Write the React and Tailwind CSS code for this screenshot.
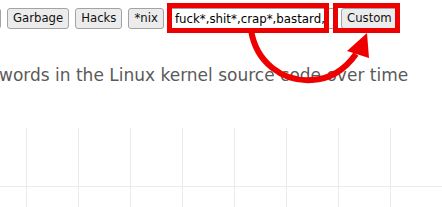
import React from 'react';

const FONT = { fontFamily: '"DejaVu Sans", Verdana, sans-serif' };

const btn =
  'h-[21px] shrink-0 rounded-[3px] border border-[#a3a3a3] bg-[#ececec] px-[5px] text-[11.7px] leading-none text-[#111]';

const GRID_COLS = [0, 1, 2, 3, 4, 5, 6, 7, 8];

const App = () => {
  return (
    <div className="relative h-[207px] w-[442px] overflow-hidden bg-white" style={FONT}>
      {/* filter buttons */}
      <div className="ml-[-49px] flex items-center gap-[6px] pt-[8px]">
        <button className={`${btn} w-[50px]`}></button>
        <button className={btn}>Garbage</button>
        <button className={btn}>Hacks</button>
        <button className={btn}>*nix</button>
        <input
          readOnly
          value="fuck*,shit*,crap*,bastard,"
          className="h-[21px] w-[165px] shrink-0 border border-[#a0a0a0] bg-white pl-[4px] pr-0 text-[11.8px] text-black outline-none"
        />
        <button className={`${btn} w-[57px]`}>Custom</button>
      </div>

      <p className="ml-[-1px] mt-[36px] whitespace-nowrap text-[17px] leading-[20px] text-[#5a5a5a]">
        words in the Linux kernel source code over time
      </p>

      {/* chart gridlines */}
      <div className="mt-[43px] h-[79px]">
        <div className="flex h-[59px] border-b border-[#ebebeb] pl-[26px]">
          {GRID_COLS.map((i) => (
            <div key={i} className="w-[52px] shrink-0 border-l border-[#ebebeb]"></div>
          ))}
        </div>
        <div className="flex h-[20px] pl-[26px]">
          {GRID_COLS.map((i) => (
            <div key={i} className="w-[52px] shrink-0 border-l border-[#ebebeb]"></div>
          ))}
        </div>
      </div>

      {/* red annotation */}
      <div className="absolute left-[167px] top-[3px] h-[30px] w-[162px] border-[5px] border-[#ee0000]"></div>
      <div className="absolute left-[333px] top-[3px] h-[30px] w-[67px] border-[5px] border-[#ee0000]"></div>
      <svg className="absolute left-0 top-0" width="442" height="207" viewBox="0 0 442 207">
        <path
          d="M251 30 C256 62, 282 82, 312 80 C333 79, 346 68, 356 54"
          fill="none"
          stroke="#ee0000"
          strokeWidth="6"
        />
        <polygon points="367,33 347,51 369,58" fill="#ee0000" />
      </svg>
    </div>
  );
};

export default App;
